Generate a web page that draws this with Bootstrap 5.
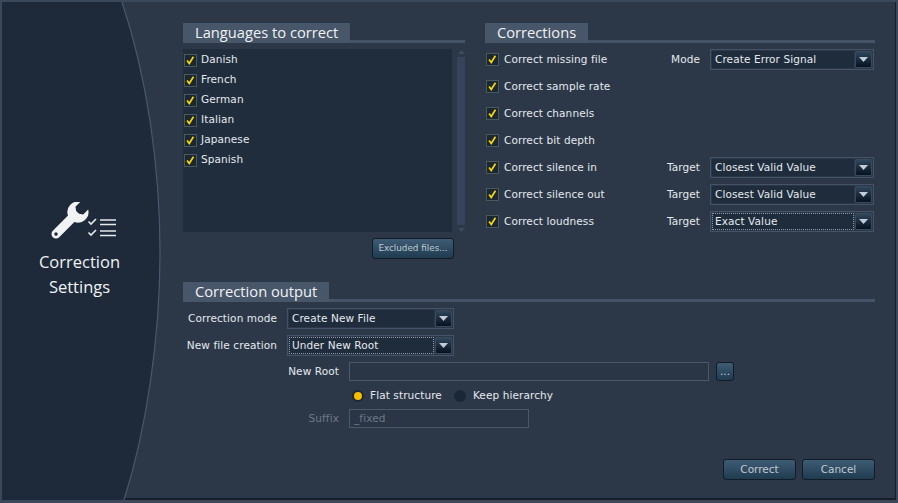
<!DOCTYPE html>
<html><head><meta charset="utf-8">
<link href="https://cdn.jsdelivr.net/npm/bootstrap@5.3.0/dist/css/bootstrap.min.css" rel="stylesheet">
<style>
html,body{margin:0;height:503px;overflow:hidden;background:#2c3848}
body{font-family:"DejaVu Sans",sans-serif;font-size:10.5px;color:#e4e9ee;letter-spacing:.1px}
.frame{width:898px;height:503px;background:#2c3848;border:2px solid #3b4859;border-bottom-width:3px;box-shadow:inset -1px -2px 0 #161f2b;display:flex}
.side{width:164px;flex:none;position:relative;display:flex;flex-direction:column;align-items:center;padding-top:200px}
.side-bg{position:absolute;left:0;top:0;width:164px;height:498px}
.side-in{position:relative;width:130px;text-align:center;margin-left:-9px}
.side-icon{display:block;margin:0 auto 0 34px;width:70px;height:38px}
.side-title{font-family:"Open Sans",sans-serif;font-size:16.5px;line-height:25px;color:#f0f2f4;margin-top:9px;letter-spacing:0}
.main{flex:1;padding:21px 21px 0 17px;min-width:0;display:flex;flex-direction:column}
.sect{border-bottom:3px solid #445367;height:20px;display:flex;align-items:flex-end}
.sect-tab{background:#475669;height:20px;margin-bottom:-3px;padding:0 12px;font-family:"Open Sans",sans-serif;font-size:14.7px;line-height:19px;color:#f0f2f4;letter-spacing:0;white-space:nowrap}
.tab-lang{width:167px}
.top{display:grid;grid-template-columns:282px 390px;column-gap:20px;height:259px}
.listwrap{display:flex;margin-top:6px;gap:5px}
.langs{width:269px;height:183px;background:#202d3d;padding:1px 1px 0}
.scroll{width:8px;display:flex;flex-direction:column;align-items:center;gap:3px;padding-top:1px}
.scroll-track{width:8px;height:168px;background:#35445a}
.scroll-arr{display:block;width:7px;height:4px}
.lang{height:20px;display:flex;align-items:center}
.cb{width:13px;height:13px;flex:none;background:#1c2732;border:1px solid #4a5a5a;margin-right:4px;display:block}
.btn-app{background:linear-gradient(#3e5c74,#1f3b50);border:1px solid #121b26;border-radius:3px;color:#c0cad2;font-size:10.5px;font-family:"DejaVu Sans",sans-serif;padding:0;height:21px;line-height:19px}
.btn-app:hover{color:#c0cad2}
.excl{width:82px;font-size:8.8px;letter-spacing:0}
.exclrow{display:flex;justify-content:flex-end;width:271px;margin-top:6px}
.crows{margin-top:3px}
.crow{height:27px;display:flex;align-items:center}
.chk{width:169px;display:flex;align-items:center;padding-left:1px}
.chk .cb{margin-right:5px}
.lbl{width:46px;text-align:right;margin-right:10px}
.pick{height:21px;border:1px solid #445367;background:#2c3848;display:flex;align-items:stretch;padding:1px;gap:1px}
.pick.wide{width:164px}
.pick.mid{width:167px}
.field{flex:1;background:#1f2c3c;padding:0 3px;line-height:17px}
.foc .field{outline:1px dotted #8f9ba8;outline-offset:-1px}
.arrow{width:17px;background:linear-gradient(#2f465c,#061221);border:1px solid #3a4a5c;border-radius:2px;display:flex;align-items:center;justify-content:center}
.arrow svg{display:block}
.orow{display:flex;align-items:center}
.r-mode{margin-top:6px;height:21px}
.r-new{margin-top:6px;height:21px}
.r-root{margin-top:6px}
.r-radio{margin-top:8px;height:14px;padding-left:169px}
.r-suffix{margin-top:6px}
.olabel{width:94px;text-align:right;margin-right:10px}
.olabel2{width:156px;text-align:right;margin-right:10px}
.fld{height:19px;border:1px solid #4b5868;background:#2a3545;color:#6d7885;padding-left:4px;line-height:17px}
.fld-root{width:360px}
.fld-suffix{width:180px}
.dis{color:#6d7885}
.dot{width:12px;height:12px;border-radius:50%;display:block;flex:none}
.dot.on{background:#f5bc00;border:2px solid #1c2732}
.dot.off{background:#1a2735}
.r-txt1{margin:0 12px 0 6px}
.r-txt2{margin-left:7px}
.foot{display:flex;justify-content:flex-end;gap:6px;margin-top:31px}
.act{width:73px}
.more{width:18px;height:19px;margin-left:7px;line-height:15px}
</style></head><body>
<svg width="0" height="0" class="d-none"><defs>
<path id="tick" d="M2.500 6.500l2.500 3.500 5-8" fill="none" stroke="#f5d90a" stroke-width="2"/>
<path id="tri" d="M0 0h9L4.500 5z" fill="#c3ccd3"/>
</defs></svg>
<div class="frame">
 <div class="side">
  <svg class="side-bg" viewBox="0 0 164 498"><path d="M0 0H120C145 75 158 165 158 250C158 335 145 425 122 498H0Z" fill="#1e2a3a"/><path d="M120 0C145 75 158 165 158 250C158 335 145 425 122 498" fill="none" stroke="#4a586b" stroke-width="1.2"/></svg>
  <div class="side-in">
   <svg class="side-icon" viewBox="49 202 70 38">
    <g transform="translate(56 234) rotate(-45)" fill="#f2f3f4"><path d="M0-4.500H21.500A10.500 10.500 0 0 1 40-5.500H33L30.500-2V2L33 5.500H40A10.500 10.500 0 0 1 21.500 4.500H0A4.500 4.500 0 0 1 0-4.500Z"/><circle r="1.700" fill="#1e2a3a"/></g>
    <path d="M88.500 221.500l2.500 2.500 5-5M88.500 232.500l2.500 2.500 5-5" fill="none" stroke="#e6e8ea" stroke-width="1.600"/>
    <path d="M100 220h16M100 224.500h16M100 231h16M100 235.500h16" stroke="#e6e8ea" stroke-width="1.500"/>
   </svg>
   <div class="side-title">Correction<br>Settings</div>
  </div>
 </div>
 <div class="main">
  <div class="top">
   <div>
    <div class="sect"><div class="sect-tab tab-lang">Languages to correct</div></div>
    <div class="listwrap">
     <div class="langs">
      <div class="lang"><svg class="cb" viewBox="0 0 13 13"><use href="#tick"/></svg><span>Danish</span></div>
      <div class="lang"><svg class="cb" viewBox="0 0 13 13"><use href="#tick"/></svg><span>French</span></div>
      <div class="lang"><svg class="cb" viewBox="0 0 13 13"><use href="#tick"/></svg><span>German</span></div>
      <div class="lang"><svg class="cb" viewBox="0 0 13 13"><use href="#tick"/></svg><span>Italian</span></div>
      <div class="lang"><svg class="cb" viewBox="0 0 13 13"><use href="#tick"/></svg><span>Japanese</span></div>
      <div class="lang"><svg class="cb" viewBox="0 0 13 13"><use href="#tick"/></svg><span>Spanish</span></div>
     </div>
     <div class="scroll">
      <svg class="scroll-arr" viewBox="0 0 7 4"><path d="M3.500 0L7 4H0z" fill="#3d4c60"/></svg>
      <div class="scroll-track"></div>
      <svg class="scroll-arr" viewBox="0 0 7 4"><path d="M0 0H7L3.500 4z" fill="#3d4c60"/></svg>
     </div>
    </div>
    <div class="exclrow"><button class="btn btn-app excl">Excluded files...</button></div>
   </div>
   <div>
    <div class="sect"><div class="sect-tab">Corrections</div></div>
    <div class="crows">
     <div class="crow"><div class="chk"><svg class="cb" viewBox="0 0 13 13"><use href="#tick"/></svg><span>Correct missing file</span></div><div class="lbl">Mode</div><div class="pick wide"><span class="field">Create Error Signal</span><span class="arrow"><svg width="9" height="5"><use href="#tri"/></svg></span></div></div>
     <div class="crow"><div class="chk"><svg class="cb" viewBox="0 0 13 13"><use href="#tick"/></svg><span>Correct sample rate</span></div></div>
     <div class="crow"><div class="chk"><svg class="cb" viewBox="0 0 13 13"><use href="#tick"/></svg><span>Correct channels</span></div></div>
     <div class="crow"><div class="chk"><svg class="cb" viewBox="0 0 13 13"><use href="#tick"/></svg><span>Correct bit depth</span></div></div>
     <div class="crow"><div class="chk"><svg class="cb" viewBox="0 0 13 13"><use href="#tick"/></svg><span>Correct silence in</span></div><div class="lbl">Target</div><div class="pick wide"><span class="field">Closest Valid Value</span><span class="arrow"><svg width="9" height="5"><use href="#tri"/></svg></span></div></div>
     <div class="crow"><div class="chk"><svg class="cb" viewBox="0 0 13 13"><use href="#tick"/></svg><span>Correct silence out</span></div><div class="lbl">Target</div><div class="pick wide"><span class="field">Closest Valid Value</span><span class="arrow"><svg width="9" height="5"><use href="#tri"/></svg></span></div></div>
     <div class="crow"><div class="chk"><svg class="cb" viewBox="0 0 13 13"><use href="#tick"/></svg><span>Correct loudness</span></div><div class="lbl">Target</div><div class="pick wide foc"><span class="field">Exact Value</span><span class="arrow"><svg width="9" height="5"><use href="#tri"/></svg></span></div></div>
    </div>
   </div>
  </div>
  <div>
   <div class="sect"><div class="sect-tab">Correction output</div></div>
   <div class="orow r-mode"><div class="olabel">Correction mode</div><div class="pick mid"><span class="field">Create New File</span><span class="arrow"><svg width="9" height="5"><use href="#tri"/></svg></span></div></div>
   <div class="orow r-new"><div class="olabel">New file creation</div><div class="pick mid foc"><span class="field">Under New Root</span><span class="arrow"><svg width="9" height="5"><use href="#tri"/></svg></span></div></div>
   <div class="orow r-root"><div class="olabel2">New Root</div><div class="fld fld-root"></div><button class="btn btn-app more">...</button></div>
   <div class="orow r-radio"><i class="dot on"></i><span class="r-txt1">Flat structure</span><i class="dot off"></i><span class="r-txt2">Keep hierarchy</span></div>
   <div class="orow r-suffix"><div class="olabel2 dis">Suffix</div><div class="fld fld-suffix">_fixed</div></div>
   <div class="foot"><button class="btn btn-app act">Correct</button><button class="btn btn-app act">Cancel</button></div>
  </div>
 </div>
</div>
<script src="https://cdn.jsdelivr.net/npm/bootstrap@5.3.0/dist/js/bootstrap.bundle.min.js"></script>
</body></html>
